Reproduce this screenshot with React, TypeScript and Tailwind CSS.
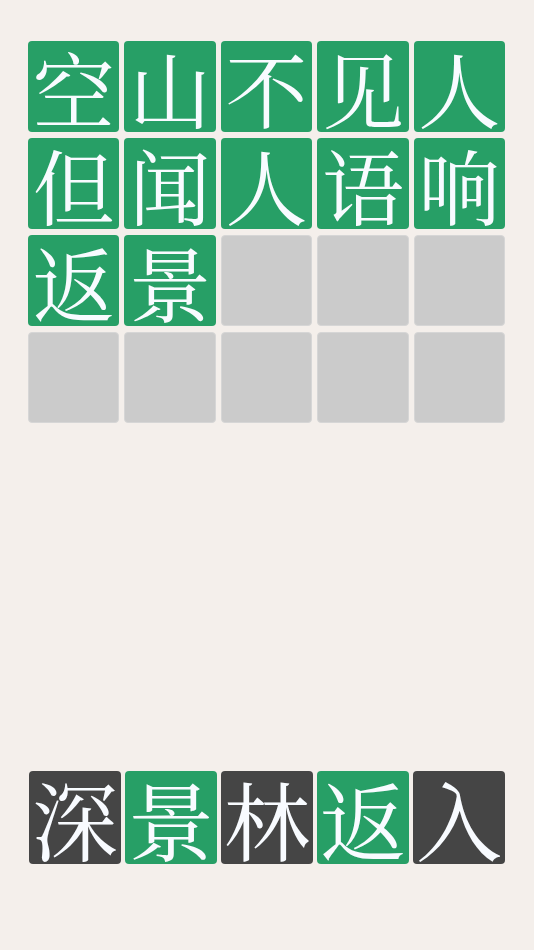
const rows: string[][] = [
  ["空", "山", "不", "见", "人"],
  ["但", "闻", "人", "语", "响"],
  ["返", "景", "", "", ""],
  ["", "", "", "", ""],
];

const keys: { ch: string; hit: boolean }[] = [
  { ch: "深", hit: false },
  { ch: "景", hit: true },
  { ch: "林", hit: false },
  { ch: "返", hit: true },
  { ch: "入", hit: false },
];

const font = {
  fontFamily:
    '"Noto Serif CJK SC", "Noto Serif SC", "Liberation Serif", "Noto Sans CJK SC", serif',
};

export default function App() {
  return (
    <div className="w-[534px] h-[950px] bg-[#f4efeb] flex flex-col" style={font}>
      <div className="mt-[41px] mx-[28px] w-[477px] grid grid-cols-5 gap-x-[5px] gap-y-[6px]">
        {rows.flat().map((ch, i) => (
          <div
            key={i}
            className={
              ch
                ? "h-[91px] rounded-[4px] bg-[#279f66] text-[#f8fbff] flex items-center justify-center text-[82px] leading-none"
                : "h-[91px] rounded-[4px] bg-[#cbcbcb] border border-[#d6d6d6]"
            }
          >
            {ch}
          </div>
        ))}
      </div>
      <div className="mt-auto mb-[86px] mx-[29px] w-[476px] grid grid-cols-5 gap-[4px]">
        {keys.map((k, i) => (
          <div
            key={i}
            className={
              (k.hit ? "bg-[#279f66]" : "bg-[#454545]") +
              " h-[93px] rounded-[4px] text-[#f8fbff] flex items-center justify-center text-[86px] leading-none"
            }
          >
            {k.ch}
          </div>
        ))}
      </div>
    </div>
  );
}
